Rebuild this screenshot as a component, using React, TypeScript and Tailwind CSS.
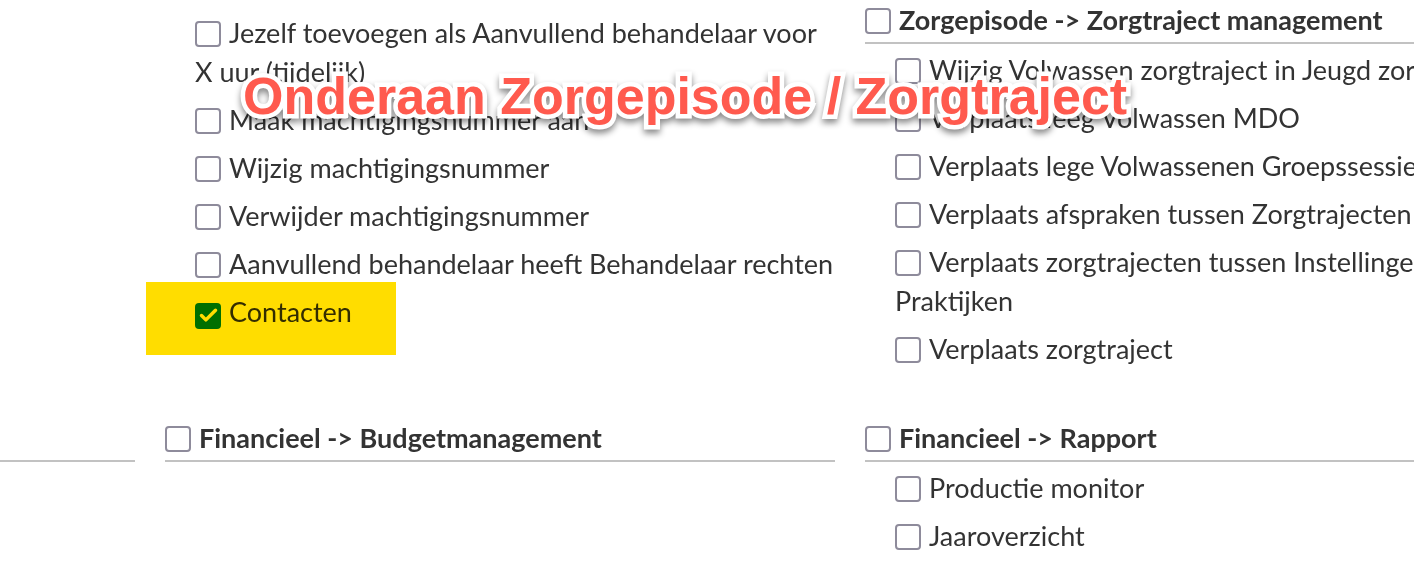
import { Check } from "lucide-react";

type Item = { label: string; checked?: boolean };

function Box({ checked }: { checked?: boolean }) {
  if (checked) {
    return (
      <span className="inline-flex align-[-4px] w-[26px] h-[26px] mr-[8px] rounded-[4px] bg-[#008000] items-center justify-center">
        <Check className="w-[21px] h-[21px] text-white" strokeWidth={4} />
      </span>
    );
  }
  return <span className="inline-block align-[-4px] w-[26px] h-[26px] mr-[8px] rounded-[4px] border-2 border-[#8e8b9b] bg-white" />;
}

function Row({ item }: { item: Item }) {
  return (
    <div className="pl-[30px] mb-[9px] leading-[39px]">
      <Box checked={item.checked} />
      {item.label}
    </div>
  );
}

function Header({ title }: { title: string }) {
  return (
    <div className="font-bold leading-[39px] pb-[3px] border-b-2 border-[#c2c2c2] mb-[6px] whitespace-nowrap">
      <Box />
      {title}
    </div>
  );
}

const behandelaar: Item[] = [
  { label: "Jezelf toevoegen als Aanvullend behandelaar voor X uur (tijdelijk)" },
  { label: "Maak machtigingsnummer aan" },
  { label: "Wijzig machtigingsnummer" },
  { label: "Verwijder machtigingsnummer" },
  { label: "Aanvullend behandelaar heeft Behandelaar rechten" },
  { label: "Contacten", checked: true },
];

const zorgtraject: Item[] = [
  { label: "Wijzig Volwassen zorgtraject in Jeugd zorgtraject" },
  { label: "Verplaats leeg Volwassen MDO" },
  { label: "Verplaats lege Volwassenen Groepssessie" },
  { label: "Verplaats afspraken tussen Zorgtrajecten" },
  { label: "Verplaats zorgtrajecten tussen Instellingen en Praktijken" },
  { label: "Verplaats zorgtraject" },
];

const rapport: Item[] = [
  { label: "Productie monitor" },
  { label: "Jaaroverzicht" },
  { label: "Omzetoverzicht" },
];

export default function App() {
  return (
    <div className="relative w-[1414px] h-[572px] overflow-hidden bg-white text-[#333333] text-[27px] font-['Lato',sans-serif]">
      <div className="grid grid-cols-[135px_670px_670px] gap-x-[30px] gap-y-[41px]">
        <div />
        <div className="pt-[13px]">
          {behandelaar.map((it) => (
            <Row key={it.label} item={it} />
          ))}
        </div>
        <div>
          <Header title="Zorgepisode -> Zorgtraject management" />
          {zorgtraject.map((it) => (
            <Row key={it.label} item={it} />
          ))}
        </div>

        <div>
          <div className="h-[39px] pb-[3px] border-b-2 border-[#c2c2c2] box-content" />
        </div>
        <div>
          <Header title="Financieel -> Budgetmanagement" />
        </div>
        <div>
          <Header title="Financieel -> Rapport" />
          {rapport.map((it) => (
            <Row key={it.label} item={it} />
          ))}
        </div>
      </div>

      {/* markeerstift */}
      <div className="absolute left-[146px] top-[282px] w-[250px] h-[73px] bg-[#ffdd00] mix-blend-multiply" />

      {/* annotatie */}
      <div className="absolute left-[243px] top-[66px] text-[52px] leading-[60px] font-bold text-[#ff5a4e] font-['Liberation_Sans',Arial,sans-serif] whitespace-nowrap [-webkit-text-stroke:9px_white] [paint-order:stroke_fill] drop-shadow-[0_4px_3px_rgba(0,0,0,0.45)]">
        Onderaan Zorgepisode / Zorgtraject
      </div>
    </div>
  );
}
